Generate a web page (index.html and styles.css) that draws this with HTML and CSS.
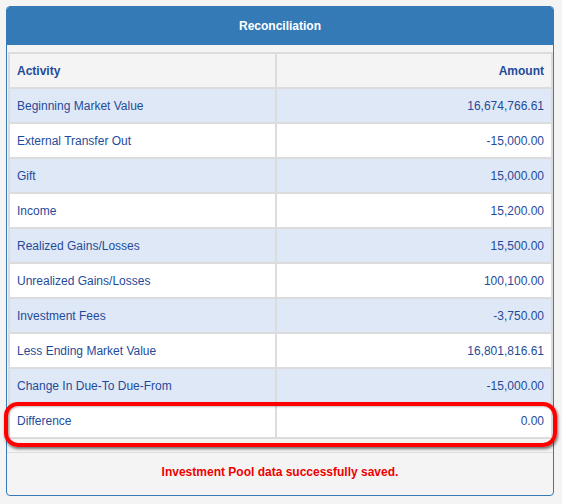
FILE: index.html
```html
<!DOCTYPE html>
<html>
<head>
<meta charset="utf-8">
<link rel="stylesheet" href="styles.css">
</head>
<body>
<div class="panel">
  <div class="panel-heading">Reconciliation</div>
  <div class="panel-body">
    <table class="recon">
      <thead>
        <tr><th class="activity">Activity</th><th class="amount">Amount</th></tr>
      </thead>
      <tbody>
        <tr class="alt"><td>Beginning Market Value</td><td class="amount">16,674,766.61</td></tr>
        <tr><td>External Transfer Out</td><td class="amount">-15,000.00</td></tr>
        <tr class="alt"><td>Gift</td><td class="amount">15,000.00</td></tr>
        <tr><td>Income</td><td class="amount">15,200.00</td></tr>
        <tr class="alt"><td>Realized Gains/Losses</td><td class="amount">15,500.00</td></tr>
        <tr><td>Unrealized Gains/Losses</td><td class="amount">100,100.00</td></tr>
        <tr class="alt"><td>Investment Fees</td><td class="amount">-3,750.00</td></tr>
        <tr><td>Less Ending Market Value</td><td class="amount">16,801,816.61</td></tr>
        <tr class="alt"><td>Change In Due-To Due-From</td><td class="amount">-15,000.00</td></tr>
        <tr><td>Difference</td><td class="amount">0.00</td></tr>
      </tbody>
    </table>
    <div class="highlight"></div>
  </div>
  <div class="panel-footer">Investment Pool data successfully saved.</div>
</div>
</body>
</html>
```

FILE: styles.css
```css
html, body {
  margin: 0;
  padding: 0;
  background: #f4f4f4;
}
body {
  padding: 6px 8px 0 6px;
  font-family: "Liberation Sans", Arial, sans-serif;
  font-size: 12px;
}
.panel {
  width: 546px;
  border: 1px solid #337ab7;
  border-radius: 4px;
  background: #f4f4f4;
}
.panel-heading {
  background: #337ab7;
  color: #fff;
  font-weight: bold;
  text-align: center;
  height: 38px;
  line-height: 38px;
  border-radius: 3px 3px 0 0;
}
.panel-body {
  position: relative;
  padding: 7px 1px 13px 1px;
  border-bottom: 1px solid #dddddd;
}
.recon {
  width: 545px;
  border-collapse: separate;
  border-spacing: 0;
  border-top: 2px solid #dcdcdc;
  border-left: 2px solid #dcdcdc;
  table-layout: fixed;
}
.recon th, .recon td {
  height: 35px;
  padding: 1px 7px 0 7px;
  border-right: 2px solid #dcdcdc;
  border-bottom: 2px solid #dcdcdc;
  color: #1f4b9b;
  text-align: left;
  box-sizing: border-box;
  background: #ffffff;
}
.recon th {
  background: #f4f4f4;
  font-weight: bold;
}
.recon th.activity, .recon td:first-child {
  width: 267px;
}
.recon .amount {
  text-align: right;
}
.recon tr.alt td {
  background: #dfe8f6;
}
.highlight {
  position: absolute;
  left: -3px;
  top: 357px;
  width: 545px;
  height: 37px;
  border: 4px solid #ff0000;
  border-radius: 14px;
  box-shadow: 1px 2px 3px rgba(0, 0, 0, 0.55), inset 1px 1px 2px rgba(0, 0, 0, 0.25);
}
.panel-footer {
  height: 42px;
  padding-top: 12px;
  box-sizing: border-box;
  text-align: center;
  color: #ee0000;
  font-weight: bold;
  line-height: 14px;
}
```
